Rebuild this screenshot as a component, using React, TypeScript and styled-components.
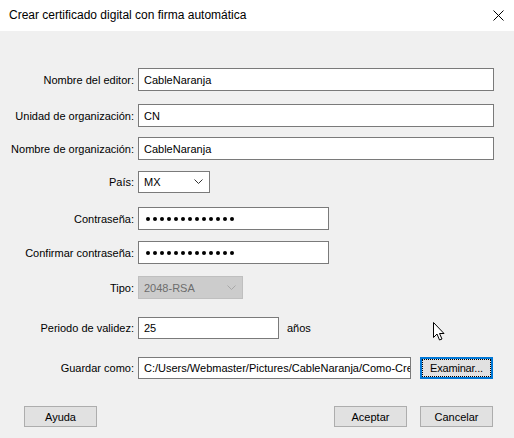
import React from 'react'
import styled, { createGlobalStyle } from 'styled-components'

const GlobalStyle = createGlobalStyle`
  html, body {
    margin: 0;
    padding: 0;
    background: #f0f0f0;
  }
  body {
    font-family: 'Liberation Sans', Arial, sans-serif;
    font-size: 11px;
    color: #000;
  }
`

const Chevron: React.FC<{ color?: string }> = ({ color = '#333' }) => (
  <svg width="9" height="6" viewBox="0 0 9 6">
    <path d="M0.5 0.5 L4.5 4.5 L8.5 0.5" fill="none" stroke={color} strokeWidth="1" />
  </svg>
)

const PasswordDots: React.FC = () => (
  <Dots>
    {Array.from({ length: 13 }).map((_, i) => (
      <Dot key={i} />
    ))}
  </Dots>
)

const App: React.FC = () => {
  return (
    <>
      <GlobalStyle />
      <Window>
        <TitleBar>
          <Title>Crear certificado digital con firma automática</Title>
          <svg width="11" height="11" viewBox="0 0 11 11">
            <path d="M0.5 0.5 L10.5 10.5 M10.5 0.5 L0.5 10.5" stroke="#000" strokeWidth="1" />
          </svg>
        </TitleBar>
        <Body>
          <Row $top={37}>
            <Label>Nombre del editor:</Label>
            <Field $w={356}>CableNaranja</Field>
          </Row>
          <Row $top={13}>
            <Label>Unidad de organización:</Label>
            <Field $w={356}>CN</Field>
          </Row>
          <Row $top={10}>
            <Label>Nombre de organización:</Label>
            <Field $w={356}>CableNaranja</Field>
          </Row>
          <Row $top={11}>
            <Label>País:</Label>
            <Select $w={72}>
              <span>MX</span>
              <Chevron />
            </Select>
          </Row>
          <Row $top={14}>
            <Label>Contraseña:</Label>
            <Field $w={191}>
              <PasswordDots />
            </Field>
          </Row>
          <Row $top={11}>
            <Label>Confirmar contraseña:</Label>
            <Field $w={191}>
              <PasswordDots />
            </Field>
          </Row>
          <Row $top={12}>
            <Label>Tipo:</Label>
            <Select $w={105} $disabled>
              <span>2048-RSA</span>
              <Chevron color="#a8a8a8" />
            </Select>
          </Row>
          <Row $top={18}>
            <Label>Periodo de validez:</Label>
            <Inline>
              <Field $w={141} $h={22}>25</Field>
              <Unit>años</Unit>
            </Inline>
          </Row>
          <Row $top={18}>
            <Label>Guardar como:</Label>
            <Inline>
              <Field $w={273} $h={22}>C:/Users/Webmaster/Pictures/CableNaranja/Como-Cre</Field>
              <FocusButton>
                <span>Examinar...</span>
              </FocusButton>
            </Inline>
          </Row>
          <Footer>
            <Button>Ayuda</Button>
            <ButtonGroup>
              <Button>Aceptar</Button>
              <Button>Cancelar</Button>
            </ButtonGroup>
          </Footer>
          <Pointer width="13" height="20" viewBox="0 0 13 20">
            <path
              d="M0.5 0.5 L0.5 15.5 L4 12 L6.5 18 L9 17 L6.5 11.5 L11 11.5 Z"
              fill="#fff"
              stroke="#000"
              strokeWidth="1"
            />
          </Pointer>
        </Body>
      </Window>
    </>
  )
}

const Window = styled.div`
  width: 514px;
  height: 438px;
  display: flex;
  flex-direction: column;
  overflow: hidden;
`

const TitleBar = styled.div`
  height: 30px;
  background: #fff;
  display: flex;
  align-items: center;
  justify-content: space-between;
  padding: 0 10px 1px 9px;
  flex-shrink: 0;
`

const Title = styled.div`
  font-size: 12px;
`

const Body = styled.div`
  position: relative;
  flex: 1;
  display: flex;
  flex-direction: column;
  background: #f0f0f0;
`

const Row = styled.div<{ $top: number }>`
  display: grid;
  grid-template-columns: 134px auto;
  column-gap: 4px;
  align-items: center;
  margin-top: ${({ $top }) => $top}px;
`

const Label = styled.div`
  justify-self: end;
  white-space: nowrap;
`

const Field = styled.div<{ $w: number; $h?: number }>`
  box-sizing: border-box;
  width: ${({ $w }) => $w}px;
  height: ${({ $h }) => $h ?? 23}px;
  background: #fff;
  border: 1px solid #7a7a7a;
  padding: 0 5px;
  display: flex;
  align-items: center;
  white-space: nowrap;
  overflow: hidden;
`

const Dots = styled.div`
  display: flex;
  gap: 3px;
  padding-left: 2px;
`

const Dot = styled.span`
  width: 4px;
  height: 4px;
  border-radius: 50%;
  background: #000;
`

const Select = styled.div<{ $w: number; $disabled?: boolean }>`
  box-sizing: border-box;
  width: ${({ $w }) => $w}px;
  height: ${({ $disabled }) => ($disabled ? 23 : 22)}px;
  display: flex;
  align-items: center;
  justify-content: space-between;
  padding: 0 6px 0 5px;
  background: ${({ $disabled }) => ($disabled ? '#cccccc' : '#fff')};
  border: 1px solid ${({ $disabled }) => ($disabled ? '#bfbfbf' : '#7a7a7a')};
  color: ${({ $disabled }) => ($disabled ? '#6d6d6d' : '#000')};
`

const Inline = styled.div`
  display: flex;
  align-items: center;
`

const Unit = styled.span`
  margin-left: 8px;
`

const Button = styled.div`
  box-sizing: border-box;
  width: 73px;
  height: 21px;
  display: flex;
  align-items: center;
  justify-content: center;
  background: #e1e1e1;
  border: 1px solid #adadad;
`

const FocusButton = styled(Button)`
  margin-left: 9px;
  height: 22px;
  border: 2px solid #0078d7;
  padding: 1px;
  & > span {
    box-sizing: border-box;
    width: 100%;
    height: 100%;
    display: flex;
    align-items: center;
    justify-content: center;
    outline: 1px dotted #000;
    letter-spacing: -0.2px;
  }
`

const Footer = styled.div`
  display: flex;
  justify-content: space-between;
  margin-top: 27px;
  padding: 0 21px 0 24px;
`

const ButtonGroup = styled.div`
  display: flex;
  gap: 13px;
`

const Pointer = styled.svg`
  position: absolute;
  left: 433px;
  top: 291px;
`

export default App
